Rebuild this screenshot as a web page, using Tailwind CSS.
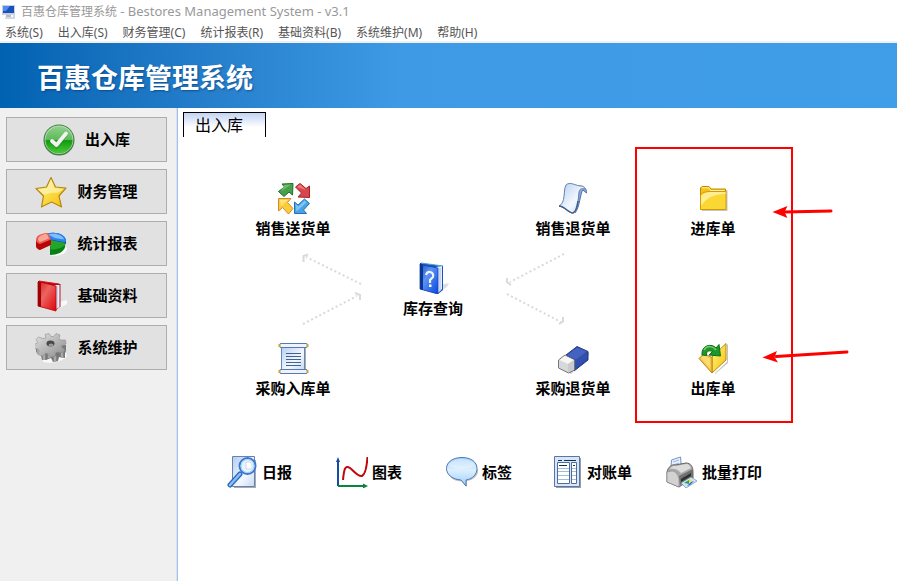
<!DOCTYPE html>
<html lang="zh-CN">
<head>
<meta charset="utf-8">
<meta name="viewport" content="width=device-width, initial-scale=1">
<title>百惠仓库管理系统</title>
<script src="https://cdn.jsdelivr.net/npm/@tailwindcss/browser@4"></script>
</head>
<body class="min-h-screen flex flex-col bg-white text-black font-['Noto_Sans','Noto_Sans_CJK_SC',sans-serif]">

<svg class="absolute size-0" aria-hidden="true">
  <defs>
    <linearGradient id="green" x1="0" y1="0" x2="0" y2="1"><stop offset="0" stop-color="#8fd08a"/><stop offset=".5" stop-color="#5cb957"/><stop offset=".52" stop-color="#129a0c"/><stop offset="1" stop-color="#4cc93c"/></linearGradient>
    <linearGradient id="gold" x1="0" y1="0" x2="1" y2="1"><stop offset="0" stop-color="#fff3a0"/><stop offset=".5" stop-color="#fbdc45"/><stop offset="1" stop-color="#f3bd08"/></linearGradient>
    <linearGradient id="red" x1="0" y1="0" x2="1" y2="1"><stop offset="0" stop-color="#d91f24"/><stop offset=".4" stop-color="#ec6560"/><stop offset="1" stop-color="#df0209"/></linearGradient>
    <linearGradient id="blue" x1="0" y1="0" x2="1" y2="1"><stop offset="0" stop-color="#1d52ca"/><stop offset=".4" stop-color="#5d92f2"/><stop offset="1" stop-color="#0648e0"/></linearGradient>
    <linearGradient id="paper" x1="0" y1="0" x2="1" y2="1"><stop offset="0" stop-color="#b4cdef"/><stop offset=".6" stop-color="#f3f8ff"/><stop offset="1" stop-color="#c6d8f2"/></linearGradient>
    <linearGradient id="metal" x1="0" y1="0" x2="1" y2="1"><stop offset="0" stop-color="#e4e4e4"/><stop offset="1" stop-color="#8c8c8c"/></linearGradient>
    <linearGradient id="bubble" x1="0" y1="0" x2="0" y2="1"><stop offset="0" stop-color="#a5d0fb"/><stop offset=".45" stop-color="#dcf0ff"/><stop offset="1" stop-color="#9dcdfa"/></linearGradient>
  </defs>
</svg>

<header>
  <div class="flex items-center h-6 pl-0.5 gap-[3px] text-[12px] text-[#999]">
    <svg class="size-4" viewBox="0 0 16 16" aria-hidden="true">
      <path d="M0 1h13v10H0z" fill="#c9d0da"/><path d="M1 2h11v7H1z" fill="#1a4fc0"/><path d="M1 2h7L4 7H1z" fill="#4f8cf0"/><path d="M4 11h5v2H4z" fill="#b4bcc6"/><path d="M3 13h8v2H3z" fill="#d5dae0"/><path d="M11 10h2v5h-2z" fill="#d3d9e0"/>
    </svg>
    <span>百惠仓库管理系统 <span class="text-[13px]">- Bestores Management System - v3.1</span></span>
  </div>
  <nav class="flex items-center h-[17px] pl-[5px] gap-[15px] text-[12px] text-[#555] whitespace-nowrap" aria-label="菜单">
    <a href="#">系统(S)</a><a href="#">出入库(S)</a><a href="#">财务管理(C)</a><a href="#">统计报表(R)</a><a href="#">基础资料(B)</a><a href="#">系统维护(M)</a><a href="#">帮助(H)</a>
  </nav>
  <div class="h-0.5 bg-[#f0f0f0]"></div>
  <div class="flex items-center h-[65px] pl-[37px] bg-linear-to-r from-[#0062b1] via-[#3e9ae4] via-[400px] to-[#409de8]">
    <h1 class="text-[27px] leading-none pt-1 font-bold text-white text-shadow-[1px_1px_2px_rgb(0_50_110/0.6)]">百惠仓库管理系统</h1>
  </div>
</header>

<div class="flex flex-1">
  <aside class="w-[178px] shrink-0 bg-[#f0f0f0] border-r border-[#a6bfe3] flex">
    <div class="flex-1 flex flex-col gap-[7px] pt-[9px] pl-[6px] pr-[9px] border-r border-[#d3e2f8]">
      <button class="flex items-center justify-center gap-2.5 h-[45px] bg-[#e1e1e1] border border-[#adadad] text-[15px] font-bold">
        <svg class="size-8" viewBox="0 0 32 32" aria-hidden="true"><circle cx="16" cy="16" r="15.5" fill="#457e49"/><circle cx="16" cy="15.7" r="14.3" fill="#b9dfb4"/><circle cx="16" cy="16" r="13.6" fill="url(#green)"/><path d="M9 18l4.500 4.500L22.500 11" fill="none" stroke="#2c7c2c" stroke-opacity=".4" stroke-width="4" stroke-linecap="round"/><path d="M9 17l4.500 4L23 9.500" fill="none" stroke="#f2f2f2" stroke-width="3.800" stroke-linecap="round" stroke-linejoin="round"/></svg>
        出入库
      </button>
      <button class="flex items-center justify-center gap-2.5 h-[45px] bg-[#e1e1e1] border border-[#adadad] text-[15px] font-bold">
        <svg class="size-8" viewBox="0 0 32 32" aria-hidden="true"><path d="M17 2l4 9 11 1-7 8 2 12-11-5-9 5z" fill="#fff" opacity=".7"/><path d="M16 1.500L20.500 11l10.500 1-7 8 2.500 11-10-5-10 5 2-11L1 12.500l10.500-1.500z" fill="url(#gold)" stroke="#b58516" stroke-width="1.200" stroke-linejoin="round"/><path d="M16 3.500L19.500 12l9 1-6 4c-7-1-13 2-13 2L3 13.500l9-1.500z" fill="#fffac8" opacity=".6"/></svg>
        财务管理
      </button>
      <button class="flex items-center justify-center gap-2.5 h-[45px] bg-[#e1e1e1] border border-[#adadad] text-[15px] font-bold">
        <svg class="size-8" viewBox="0 0 32 32" aria-hidden="true"><path d="M14 27l18-8c1 6-6 9-14 9z" fill="#fff" opacity=".8"/><path d="M11 6c9-3.500 20 .5 20 7v3c-3 2-14 0-15-3z" fill="#0a43b5"/><path d="M11 6c9-3.500 20 0 20 7l-1 1.500-14-3z" fill="#2b83ef"/><path d="M13 6.500c8-2 15 1 16 5l-9-1.500z" fill="#9fd2ff" opacity=".75"/><path d="M15 18l15-4v5c-1 5-8 8-15 8z" fill="#068014"/><path d="M16 12l14.500 3c-.5 4-7 6.500-15 6.500v-4z" fill="#25a62a"/><path d="M1 12v7c1 2 3 3 4 3l11-5v-5z" fill="#b70509"/><path d="M1 12c0-5 6-7 12-7l3 6.500L5 16c-2-.5-4-2-4-4z" fill="#ee5b50"/><path d="M3 11c1-3.500 5-5 9-5l2 4.500L5 14c-1-.5-2-2-2-3z" fill="#fbb9ad" opacity=".8"/></svg>
        统计报表
      </button>
      <button class="flex items-center justify-center gap-2.5 h-[45px] bg-[#e1e1e1] border border-[#adadad] text-[15px] font-bold">
        <svg class="size-8" viewBox="0 0 32 32" aria-hidden="true"><path d="M24 22l8-2v4l-9 5z" fill="#fff" opacity=".8"/><path d="M3 1l22 3v23l-4 3L3 26z" fill="#b5040b"/><path d="M19 5l6 0v22l-4 2z" fill="#e8efff"/><path d="M22 6v22" stroke="#a9bfe8"/><path d="M25 4v23" stroke="#b8161f"/><path d="M5 2l16 4v25L3 26V2z" fill="url(#red)" stroke="#bd0008" stroke-width=".8"/><path d="M3 1l3 1v25l-3-1z" fill="#9d0007"/><path d="M4 1l20 3" stroke="#d51820"/></svg>
        基础资料
      </button>
      <button class="flex items-center justify-center gap-2.5 h-[45px] bg-[#e1e1e1] border border-[#adadad] text-[15px] font-bold">
        <svg class="size-8" viewBox="0 0 32 32" aria-hidden="true">
          <path d="M8 28l23-7 1 3c-3 5-14 8-24 6z" fill="#fff" opacity=".8"/>
          <path d="M1 15v5l5 3 1 5h4l5-2 2 4 5-1 1-4 6 1v-5l1-2v-6z" fill="#777"/>
          <path d="M3 17v5M9 22v6M14 22v4M20 24v6M27 20v6" stroke="#a9a9a9" stroke-width="2.500"/>
          <path d="M11 6L10 2.500l4-1 2 3h2.500l2.500-3 4 1.500-1 3.500 2 1.500 4.500 0 .5 4-4 1.500-.5 1.500 3.500 3-2.500 3-5-1-2 1-.5 3.500-5 .5-2-3.500h-2.500l-3.500 2.500-4-1.500 1-4-1-1.500-5-.5v-4l4-1 .5-1.500L1 7.500l2.500-2.500 4.500 1.500z" fill="url(#metal)" stroke="#8e8e8e" stroke-width=".6"/>
          <ellipse cx="15.500" cy="11.500" rx="4" ry="3" fill="#484848"/><ellipse cx="16" cy="13" rx="2.500" ry="1.500" fill="#999"/>
        </svg>
        系统维护
      </button>
    </div>
  </aside>

  <main class="flex-1 min-w-0 pt-1 bg-white">
    <div class="ml-[5px] w-[83px] h-[25px] flex items-center pl-[11px] border border-b-0 border-black bg-linear-to-b from-[#c3d3f3] to-white to-60% text-[16px]">出入库</div>

    <div class="relative ml-[45px] mt-[43px] w-[560px] grid grid-cols-4 auto-rows-[80px] text-[15px] leading-5 font-bold">
      <svg class="absolute inset-0 size-full overflow-visible pointer-events-none" viewBox="0 0 560 240" fill="none" stroke="#d9d9d9" stroke-width="2" aria-hidden="true">
        <g stroke-dasharray="2 2.600"><path d="M138 104L83 77"/><path d="M80 144l54-28"/><path d="M341 74l-54 28"/><path d="M284 114l54 28"/></g>
        <g stroke="#dfd8d8"><path d="M85 74.500l-4.500 1.500v6"/><path d="M132 113l5 2v5"/><path d="M284 98v4l4 3"/><path d="M340 137v4.500l-4 2.500"/></g>
      </svg>

      <a href="#" class="col-start-1 row-start-1 flex flex-col items-center gap-1 pt-0.5">
        <svg class="size-8 overflow-visible" viewBox="0 0 32 32" stroke-linejoin="round" aria-hidden="true">
          <path d="M5 2L16 1.500 15.500 13l-3.500-3-5 4.500L1.500 9.500 7.500 5z" fill="#45a049" stroke="#1d7028"/><path d="M7 3l7-.5-10 7z" fill="#8fcf8b" opacity=".6"/>
          <path d="M18.500 5L23 1.500l6 5L32.500 4v11.500L21 15l3.500-4z" fill="#d7464a" stroke="#a81f28"/><path d="M20 5l3-2.500 6 5.500z" fill="#f3a29d" opacity=".6"/>
          <path d="M1.500 16.500l12.500 0-3.500 4 5.500 6-4.500 5.500-6-6.500L1.500 29z" fill="#fbcc3a" stroke="#d08a2c"/><path d="M3 18l8 0-7 6z" fill="#fff0a0" opacity=".7"/>
          <path d="M17.500 20l3.500 3 6.500-6 5 4.500-6 6.500 3 3.500H17.500z" fill="#45a3e6" stroke="#2a6fb5"/><path d="M18.500 22l3 2.500 6-6 2 2-10 9z" fill="#a8dcff" opacity=".6"/>
        </svg>
        销售送货单
      </a>
      <a href="#" class="col-start-3 row-start-1 flex flex-col items-center gap-1 pt-0.5">
        <svg class="size-8" viewBox="0 0 32 32" aria-hidden="true"><path d="M22 4c5 0 8 3 7.500 7l-3.500-3c-3 3-3 17-8 23" fill="#8da9d3" stroke="#54709f"/><path d="M9 3c4-4 10 1 15 1 3 0 4 2 3 3-3-1-4 0-5 3-1 7-1 20-6 21-5 0-8-6-14-7 7-3 4-16 7-21z" fill="url(#paper)" stroke="#6482b5"/><path d="M2 24c6 0 9 7 14 7 3-1 4-6 5-12" fill="none" stroke="#435e8d" stroke-width="1.500"/></svg>
        销售退货单
      </a>
      <a href="#" class="col-start-4 row-start-1 flex flex-col items-center gap-1 pt-0.5">
        <svg class="size-8" viewBox="0 0 32 32" aria-hidden="true"><path d="M5 8h25.500v21H5z" fill="#8e8e8e" opacity=".5"/><path d="M3.500 27.500V6l1.500-1.500h7L14 7h14.500v20z" fill="#f2c31d" stroke="#c58b00"/><path d="M5 5.800h7l1.500 2.700h14" fill="none" stroke="#fff1a3"/><path d="M3.500 13c2-3 6-3.500 10-3.500h15.500v18H3.500z" fill="#fbd733" stroke="#d49b00"/><path d="M4 14c2-3 6-4 10-4h14.500v2C17 12 9 16 4 24z" fill="#fff2ab" opacity=".8"/></svg>
        进库单
      </a>
      <a href="#" class="col-start-2 row-start-2 flex flex-col items-center gap-1 pt-0.5">
        <svg class="size-8" viewBox="0 0 32 32" aria-hidden="true"><path d="M23 23l9-2-2 4-8 5z" fill="#dedede"/><path d="M3 1l23 3v24l-5 4L3 27z" fill="#1454bf"/><path d="M19 5l6-1v23l-4 4z" fill="#e6edff"/><path d="M23 6v23" stroke="#a8bee8"/><path d="M5 3l16 3v26L3 27V2z" fill="url(#blue)" stroke="#1742ad" stroke-width=".8"/><path d="M3 1l3 2v25l-3-1z" fill="#0a3793"/><path d="M4 1l22 3" stroke="#46a0dc"/><path d="M9 13q1-3.500 4-3 4 1 3 5l-3 3v3" fill="none" stroke="#f0f4ff" stroke-width="2.200"/><path d="M12 22.500h2.500V25H12z" fill="#fff"/></svg>
        库存查询
      </a>
      <a href="#" class="col-start-1 row-start-3 flex flex-col items-center gap-1 pt-0.5">
        <svg class="size-8" viewBox="0 0 32 32" aria-hidden="true"><path d="M6 5h23v24H6z" fill="#adadad"/><path d="M4.500 4h23v24h-23z" fill="url(#paper)" stroke="#6887b5"/><rect x="2.500" y="1.500" width="28" height="4" rx="1.500" fill="#edf4ff" stroke="#587ab0"/><rect x="2.500" y="27.500" width="28" height="4" rx="1.500" fill="#edf4ff" stroke="#587ab0"/><path d="M1.500 2h2v3h-2zM29.500 2h2v3h-2zM1.500 28h2v3h-2zM29.500 28h2v3h-2z" fill="#d0a321"/><path d="M9 11.500h15M9 14.500h15M9 17.500h15M9 20.500h15M9 23.500h15" stroke="#416296"/></svg>
        采购入库单
      </a>
      <a href="#" class="col-start-3 row-start-3 flex flex-col items-center gap-1 pt-0.5">
        <svg class="size-8" viewBox="0 0 32 32" aria-hidden="true"><path d="M5 26l9 6 18-19v-3z" fill="#999" opacity=".6"/><path d="M9 13L20 4.500l11 5V18L17 29z" fill="#26429d" stroke="#263d84"/><path d="M10 13l10-7.500 10 4L19 18z" fill="#4463c0"/><path d="M17 19L30 10v7.500L17 28z" fill="#314fac"/><path d="M1.500 18L8 13l9.500 5v10l-6 3-10-5z" fill="#d7d8da" stroke="#777"/><path d="M2.500 18L8 13.800l9 4.200-6 4z" fill="#f6f6f6"/><path d="M11 22l6-4v9.500l-6 3z" fill="#c9cacc"/></svg>
        采购退货单
      </a>
      <a href="#" class="col-start-4 row-start-3 flex flex-col items-center gap-1 pt-0.5">
        <svg class="size-8" viewBox="0 0 32 32" aria-hidden="true"><path d="M18 31l12-11V3l1-1v19L18 32z" fill="#999" opacity=".6"/><path d="M15 31V15L29 1.500V18z" fill="url(#gold)" stroke="#b88614"/><path d="M2 16.500l5-5 8 4v15.500z" fill="#f6c744" stroke="#b88614"/><path d="M4 16l3-3 6 3.500v10z" fill="#fde487" opacity=".7"/><path d="M5 13C4 3 15 1 19 6l3-3.500L23.500 14 12 13l3.500-3.500C12 8 9 9 9.500 13.500z" fill="#1f962a" stroke="#0d6f19"/><path d="M7 8c3-5 9-4 12 0" fill="none" stroke="#76cb64" stroke-width="1.500"/></svg>
        出库单
      </a>

      <div class="absolute left-[412px] -top-[33px] w-[158px] h-[276px] border-2 border-[#ff0000] pointer-events-none"></div>
      <svg class="absolute inset-0 size-full overflow-visible pointer-events-none" viewBox="0 0 560 240" fill="#ff0000" stroke="#ff0000" aria-hidden="true">
        <path d="M561 32l47-1M553 176.500l71-4.500" stroke-width="3" stroke-linecap="round"/>
        <path d="M549.500 32l15-6-3 6 3 6zM539.500 177.500l14.500-6.500-2.500 6 3.500 5.500z" stroke="none"/>
      </svg>
    </div>

    <div class="mt-9 ml-12 grid grid-cols-[110px_110px_105px_115px_auto] text-[15px] leading-5 font-bold">
      <a href="#" class="flex items-center gap-1">
        <svg class="size-8" viewBox="0 0 32 32" aria-hidden="true"><path d="M8 4h22v28H8z" fill="#aaa"/><path d="M6.500.5h22v30h-22z" fill="url(#paper)" stroke="#6482b5"/><path d="M14 18L4 29" stroke="#2f66bb" stroke-width="5" stroke-linecap="round"/><path d="M14 18L4 29" stroke="#86c0fa" stroke-width="2.500" stroke-linecap="round"/><circle cx="21.500" cy="10" r="8" fill="#e9f4ff" fill-opacity=".85" stroke="#3d78cf" stroke-width="2"/><circle cx="21.500" cy="10" r="6.500" fill="none" stroke="#9fcdf8"/><path d="M20 6v7h6V9l-2-3z" fill="#fff" stroke="#bacbe0" stroke-width=".7"/></svg>
        日报
      </a>
      <a href="#" class="flex items-center gap-1">
        <svg class="size-8" viewBox="0 0 32 32" fill="none" aria-hidden="true"><path d="M2 30V4" stroke="#134ea1" stroke-width="2"/><path d="M2 1l2 5H0z" fill="#134ea1"/><path d="M2 30h27" stroke="#098540" stroke-width="2"/><path d="M32 30l-5-2.500v5z" fill="#098540"/><path d="M7 24C8 13 9 9 14 12c4 3 8 9 12 8 4-2 5-12 5.500-19" stroke="#c0060d" stroke-width="2"/></svg>
        图表
      </a>
      <a href="#" class="flex items-center gap-1">
        <svg class="size-8" viewBox="0 0 32 32" aria-hidden="true"><path d="M2 16c2 8 10 10 13 9l6 6v-6c7-1 12-6 11-12z" fill="#aaa" opacity=".7"/><path d="M16 1.500C7 1.500.5 6 .5 12.500S7 23.500 15 24l5 6v-6c7-1 11-6 11-11.500C31 6 25 1.500 16 1.500z" fill="url(#bubble)" stroke="#4c78b5"/><path d="M16 3C9 3 3 6 3 10c8 4 18 4 26 0 0-4-7-7-13-7z" fill="#fff" opacity=".35"/></svg>
        标签
      </a>
      <a href="#" class="flex items-center gap-1">
        <svg class="size-8" viewBox="0 0 32 32" aria-hidden="true"><path d="M5 2h25v30H5z" fill="#9c9c9c"/><path d="M3.500.5h25v30h-25z" fill="#dae6f7" stroke="#5477ab"/><path d="M6.500 6.500h12v21h-12zM20.500 6.500h5v21h-5z" fill="#fff" stroke="#4c6e9f"/><path d="M7 12.500h11M7 15.500h11M7 19.500h11M7 23.500h11M21 12.500h4M21 15.500h4M21 19.500h4M21 23.500h4" stroke="#a3bbdc"/><path d="M7 4.500h4M13 4.500h12M8 9.500h8M22 9.500h2" stroke="#172d50"/></svg>
        对账单
      </a>
      <a href="#" class="flex items-center gap-1">
        <svg class="size-8" viewBox="0 0 32 32" aria-hidden="true"><path d="M5 11L5.500 4l9-3 1 12z" fill="#e8f2ff" stroke="#7293c4"/><path d="M7 6l6-2M7 9l6-2" stroke="#99b5df"/><path d="M1 16c1-5 5-8 8-7l11-2c5 0 7 4 7 9v6L13 31 1 26z" fill="#a8a8a8" stroke="#666"/><path d="M4 13c1-2 4-4 6-3l10-2c3 0 4 2 5 4l-10 5c-3-4-7-5-11-4z" fill="#dcdcdc"/><path d="M1 16l5-1c3 0 6 3 7 8v8L1 26z" fill="#d2d2d2" stroke="#888" stroke-width=".6"/><path d="M13 20l14-7v9l-13 7z" fill="#707070"/><path d="M15 23l10-6v3l-10 6z" fill="#303030"/><path d="M15 27l10-6 6 4-11 7z" fill="#cfe6fb" stroke="#5979a6" stroke-width=".6"/><path d="M18 27l5-3v4z" fill="#28a447"/><path d="M23 23l3 1-3 3z" fill="#f7d729"/><path d="M25 26l3-1-4 4-3 1z" fill="#276ad4"/></svg>
        批量打印
      </a>
    </div>
  </main>
</div>
</body>
</html>
